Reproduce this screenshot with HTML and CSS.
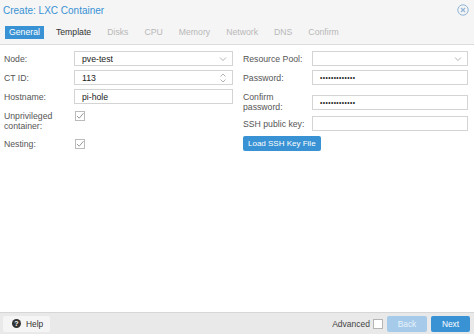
FILE: index.html
```html
<!DOCTYPE html>
<html lang="en">
<head>
  <meta charset="UTF-8">
  <title>Create: LXC Container</title>
  <link rel="stylesheet" href="styles.css">
</head>
<body>
  <div class="win">
    <div class="head">
      <div class="title-row">
        <span class="title">Create: LXC Container</span>
        <svg class="close" width="12" height="12" viewBox="0 0 12 12">
          <circle cx="6" cy="6" r="5.2" fill="none" stroke="#8fb4d6" stroke-width="1"/>
          <path d="M4 4 L8 8 M8 4 L4 8" stroke="#8fb4d6" stroke-width="1.1"/>
        </svg>
      </div>
      <div class="tabs">
        <span class="tab active">General</span>
        <span class="tab">Template</span>
        <span class="tab off">Disks</span>
        <span class="tab off">CPU</span>
        <span class="tab off">Memory</span>
        <span class="tab off">Network</span>
        <span class="tab off">DNS</span>
        <span class="tab off">Confirm</span>
      </div>
    </div>

    <div class="form">
      <div class="col left">
        <div class="row">
          <label>Node:</label>
          <div class="field">pve-test
            <svg class="trig" width="8" height="5" viewBox="0 0 8 5"><path d="M1 1 L4 4 L7 1" fill="none" stroke="#aaa" stroke-width="0.9"/></svg>
          </div>
        </div>
        <div class="row">
          <label>CT ID:</label>
          <div class="field">113
            <svg class="trig" width="8" height="11" viewBox="0 0 8 11"><path d="M1.5 4 L4 1.5 L6.5 4 M1.5 7 L4 9.5 L6.5 7" fill="none" stroke="#aaa" stroke-width="0.9"/></svg>
          </div>
        </div>
        <div class="row">
          <label>Hostname:</label>
          <div class="field">pi-hole</div>
        </div>
        <div class="row top unpriv">
          <label>Unprivileged container:</label>
          <span class="check">
            <svg width="10" height="10" viewBox="0 0 10 10"><rect x="0.5" y="0.5" width="9" height="9" fill="#fff" stroke="#bbb"/><path d="M2 5 L4.2 7.2 L8.5 2.2" fill="none" stroke="#999" stroke-width="1"/></svg>
          </span>
        </div>
        <div class="row nesting">
          <label>Nesting:</label>
          <span class="check">
            <svg width="10" height="10" viewBox="0 0 10 10"><rect x="0.5" y="0.5" width="9" height="9" fill="#fff" stroke="#bbb"/><path d="M2 5 L4.2 7.2 L8.5 2.2" fill="none" stroke="#999" stroke-width="1"/></svg>
          </span>
        </div>
      </div>

      <div class="col right">
        <div class="row">
          <label>Resource Pool:</label>
          <div class="field">
            <svg class="trig" width="8" height="5" viewBox="0 0 8 5"><path d="M1 1 L4 4 L7 1" fill="none" stroke="#aaa" stroke-width="0.9"/></svg>
          </div>
        </div>
        <div class="row">
          <label>Password:</label>
          <div class="field dots">•••••••••••••</div>
        </div>
        <div class="row confirm">
          <label>Confirm password:</label>
          <div class="field dots">•••••••••••••</div>
        </div>
        <div class="row">
          <label>SSH public key:</label>
          <div class="field"></div>
        </div>
        <div class="row load">
          <button class="btn blue">Load SSH Key File</button>
        </div>
      </div>
    </div>

    <div class="foot">
      <button class="btn help">
        <svg width="9" height="9" viewBox="0 0 10 10"><circle cx="5" cy="5" r="5" fill="#333"/><text x="5" y="8" font-size="8" font-weight="bold" fill="#fff" text-anchor="middle" font-family="Liberation Sans, sans-serif">?</text></svg>
        Help
      </button>
      <span class="spacer"></span>
      <span class="adv">Advanced</span>
      <span class="box"></span>
      <button class="btn back">Back</button>
      <button class="btn blue next">Next</button>
    </div>
  </div>
</body>
</html>
```

FILE: styles.css
```css
html, body { margin: 0; padding: 0; background: #fff; }
body { font-family: "Liberation Sans", Arial, sans-serif; font-size: 8.7px; color: #333; }
.win { width: 474px; height: 334px; display: flex; flex-direction: column; }

.head { background: #f5f5f5; border-bottom: 1px solid #dcdcdc; }
.title-row { display: flex; align-items: center; justify-content: space-between; height: 20px; padding: 0 5px 0 3px; }
.title { color: #3892d4; font-size: 10px; }
.tabs { display: flex; gap: 8px; padding: 6px 0 5px 5px; }
.tab { font-size: 8.7px; padding: 2px 4px; line-height: 9px; color: #333; }
.tab.active { background: #3892d4; color: #fff; }
.tab.off { color: #b8b8b8; }

.form { flex: 1; display: flex; gap: 10px; padding: 6px 6px 0 4px; }
.col { display: flex; flex-direction: column; gap: 4px; }
.left { width: 229px; }
.right { flex: 1; }
.row { display: flex; align-items: center; min-height: 15px; }
.row.top { align-items: flex-start; }
.row label { width: 70px; line-height: 10px; color: #555; }
.right .row label { width: 69px; }
.unpriv { margin-top: 3px; }
.nesting { margin-top: 1px; }
.confirm { margin-top: 3px; }
.load { margin-top: 1px; }
.field { flex: 1; height: 13px; border: 1px solid #d4d4d4; background: #fff; display: flex; align-items: center; padding-left: 7px; color: #222; position: relative; }
.trig { position: absolute; right: 5px; top: 50%; transform: translateY(-50%); }
.dots { font-size: 6.5px; letter-spacing: 0.45px; color: #222; }
.check { display: flex; padding-left: 1px; margin-top: 0; }

.btn { font-family: inherit; font-size: 8px; border: none; border-radius: 2px; padding: 0 5px; height: 15px; cursor: pointer; }
.blue { background: #3892d4; color: #fff; }

.foot { height: 21px; background: #e9e9e9; border-top: 1px solid #d6d6d6; display: flex; align-items: center; padding: 0 4px 0 3px; gap: 4px; }
.help { background: #f5f5f5; color: #333; width: 47px; height: 16px; display: flex; align-items: center; gap: 5px; padding-left: 9px; font-size: 8.4px; }
.spacer { flex: 1; }
.adv { color: #444; font-size: 8.5px; }
.box { width: 8px; height: 8px; border: 1px solid #b5b5b5; background: #fff; margin-left: -1px; }
.back { background: #a6cbea; color: #e8f2fb; width: 40px; height: 16px; font-size: 8.4px; }
.next { width: 39px; height: 16px; font-size: 8.4px; }
```
